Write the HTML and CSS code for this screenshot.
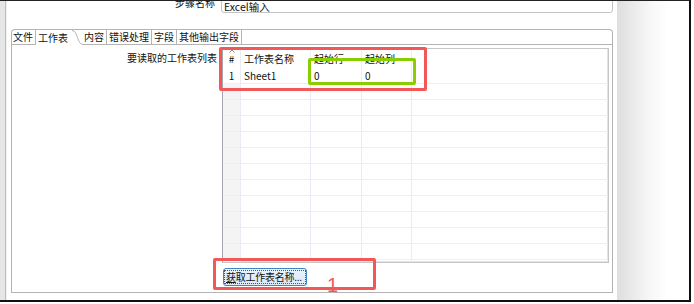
FILE: index.html
```html
<!DOCTYPE html>
<html lang="zh-CN">
<head>
    <meta charset="UTF-8">
    <meta name="viewport" content="width=device-width, initial-scale=1.0">
    <link rel="stylesheet" href="styles.css">
    <title>Excel输入</title>
</head>
<body>
<div class="shot">
    <div class="frame">
        <div class="edge"></div>
        <main class="dialog">
            <div class="steprow">
                <label class="steplabel" for="StepName">步骤名称</label>
                <div class="stepfield" id="StepName">Excel输入</div>
            </div>
            <div class="folder">
                <ul class="tabs">
                    <li class="tab first">文件</li>
                    <li class="tab active">工作表<svg class="curve" width="11" height="15" viewBox="0 0 11 15"><path d="M0 0.5 C6 0.5 5 14.5 11 14.5" fill="none" stroke="#b4b4b4"/></svg></li>
                    <li class="tab after">内容</li>
                    <li class="tab">错误处理</li>
                    <li class="tab">字段</li>
                    <li class="tab">其他输出字段</li>
                    <li class="tabfill"></li>
                </ul>
                <div class="pane">
                    <div class="sheetlabel">要读取的工作表列表</div>
                    <div class="sheets">
                        <div class="cell hd num"><svg class="sort" width="6" height="4" viewBox="0 0 6 4"><path d="M0.5 3.5 L3 1 L5.5 3.5" fill="none" stroke="#8a8a8a"/></svg>#</div>
                        <div class="cell hd">工作表名称</div>
                        <div class="cell hd">起始行</div>
                        <div class="cell hd">起始列</div>
                        <div class="cell hd last"></div>

                        <div class="cell num first-row">1</div>
                        <div class="cell">Sheet1</div>
                        <div class="cell">0</div>
                        <div class="cell">0</div>
                        <div class="cell last"></div>
                    </div>
                    <div></div>
                    <div class="btnrow">
                        <button class="getbtn"><span class="focus"><u>获</u>取工作表名称...</span></button>
                    </div>
                </div>
            </div>
        </main>
        <div class="shade"></div>
    </div>

    <div class="mark red listbox"></div>
    <div class="mark green startbox"></div>
    <div class="mark red btnbox"></div>
    <div class="step-no">1</div>
</div>

<script>
    // empty rows to fill the table down to its bottom edge
    const Sheets = document.querySelector(".sheets")
    for (let i = 0; i < 12; i++) {
        Sheets.insertAdjacentHTML("beforeend",
            '<div class="cell num"></div><div class="cell"></div><div class="cell"></div><div class="cell"></div><div class="cell last"></div>')
    }
</script>
</body>
</html>
```

FILE: styles.css
```css
* {
 margin: 0;
 padding: 0;
 box-sizing: border-box;
}

body {
 width: 694px;
 height: 304px;
 overflow: hidden;
 background-color: #fff;
 font-family: "Noto Sans CJK SC", "Noto Sans", sans-serif;
 font-size: 10px;
 line-height: 12px;
 color: #111;
}

.shot {
 position: relative;
 width: 694px;
 height: 304px;
 overflow: hidden;
}

.frame {
 display: flex;
 width: 691px;
 height: 302px;
 border-top: 1px solid #222;
 border-right: 2px solid #111;
 border-bottom: 2px solid #111;
}

.edge {
 width: 7px;
 background: linear-gradient(to right, #e6e6e6 0 5px, #bdbdbd 5px 6px, #f2f2f2 6px 7px);
}

.dialog {
 width: 610px;
 padding: 0 4px;
 background-color: #fff;
 overflow: hidden;
}

.shade {
 flex: 1;
 background: linear-gradient(to right, #dedede, #f7f7f7 45%, #fff 70%);
}

/* step name row, cut by the top of the picture */
.steprow {
 display: grid;
 grid-template-columns: 204px 1fr;
 column-gap: 6px;
 margin-top: -7px;
 height: 19px;
}

.steplabel {
 text-align: right;
 padding-top: 3px;
}

.stepfield {
 border: 1px solid #c4c4c4;
 border-radius: 0 0 3px 3px;
 padding: 6px 2px 0;
 font-size: 10.5px;
 line-height: 11px;
}

/* tab folder */
.folder {
 margin-top: 16px;
}

.tabs {
 display: flex;
 list-style-type: none;
 height: 16px;
 border: 1px solid #b4b4b4;
 border-bottom: none;
 border-radius: 4px 4px 0 0;
}

.tab {
 display: flex;
 align-items: center;
 height: 15px;
 padding: 0 2px;
 border-right: 1px solid #b4b4b4;
 border-bottom: 1px solid #b4b4b4;
 white-space: nowrap;
}

.tab.first {
 padding-left: 1px;
}

.tab.active {
 border-right: none;
 border-bottom: none;
 padding-right: 0;
}

.tab.active .curve {
 margin-left: 4px;
 align-self: flex-start;
}

.tab.after {
 padding-left: 1px;
}

.tabfill {
 flex: 1;
 border-bottom: 1px solid #b4b4b4;
}

.pane {
 display: grid;
 grid-template-columns: 205px 1fr;
 grid-template-rows: 215px 18px;
 column-gap: 5px;
 row-gap: 5px;
 height: 248px;
 padding: 3px 3px 6px 0;
 border: 1px solid #b4b4b4;
 border-top: none;
}

.sheetlabel {
 text-align: right;
 padding-top: 4px;
}

/* sheet list table */
.sheets {
 display: grid;
 grid-template-columns: 18px 70px 51px 50px 1fr;
 grid-auto-rows: 16px;
 grid-template-rows: 19px;
 overflow: hidden;
 border: 1px solid #c6c6c6;
 border-left-color: #a4a4ac;
 box-shadow: inset -1px -1px 0 #e4e4e4;
}

.cell {
 position: relative;
 padding: 2px 0 0 3px;
 border-right: 1px solid #e9ecf2;
 border-bottom: 1px solid #efefef;
 white-space: nowrap;
}

.cell.hd {
 padding-top: 4px;
 border-bottom-color: transparent;
}

.cell.last {
 border-right: none;
}

.cell.num {
 padding-left: 0;
 text-align: center;
 background-color: #f4f4f4;
}

.cell.hd.num,
.cell.num.first-row {
 background-color: #fff;
}

.sort {
 position: absolute;
 top: 0;
 left: 6px;
}

.btnrow {
 padding-left: 1px;
}

.getbtn {
 width: 84px;
 height: 18px;
 padding: 2px 1px;
 font-family: inherit;
 font-size: 10px;
 line-height: 12px;
 color: #111;
 background: linear-gradient(#eaf3fb, #d9e9f6);
 border: 1px solid #3f86c2;
 border-radius: 3px;
 overflow: visible;
}

.getbtn .focus {
 display: block;
 height: 12px;
 padding-left: 1px;
 text-align: left;
 outline: 1px dotted #555;
 white-space: nowrap;
 letter-spacing: -0.25px;
}

.getbtn u {
 text-underline-offset: 1px;
}

/* annotation marks drawn over the screenshot */
.mark {
 position: absolute;
 border: 3px solid;
 border-radius: 2px;
}

.red {
 border-color: #f25858;
}

.green {
 border-color: #8ccd00;
}

.listbox {
 left: 219px;
 top: 47px;
 width: 208px;
 height: 44px;
}

.startbox {
 left: 308px;
 top: 58px;
 width: 108px;
 height: 27px;
}

.btnbox {
 left: 213px;
 top: 258px;
 width: 163px;
 height: 32px;
}

.step-no {
 position: absolute;
 left: 327px;
 top: 275px;
 font-family: "Liberation Sans", sans-serif;
 font-size: 20px;
 line-height: 20px;
 color: #f25858;
}
```
